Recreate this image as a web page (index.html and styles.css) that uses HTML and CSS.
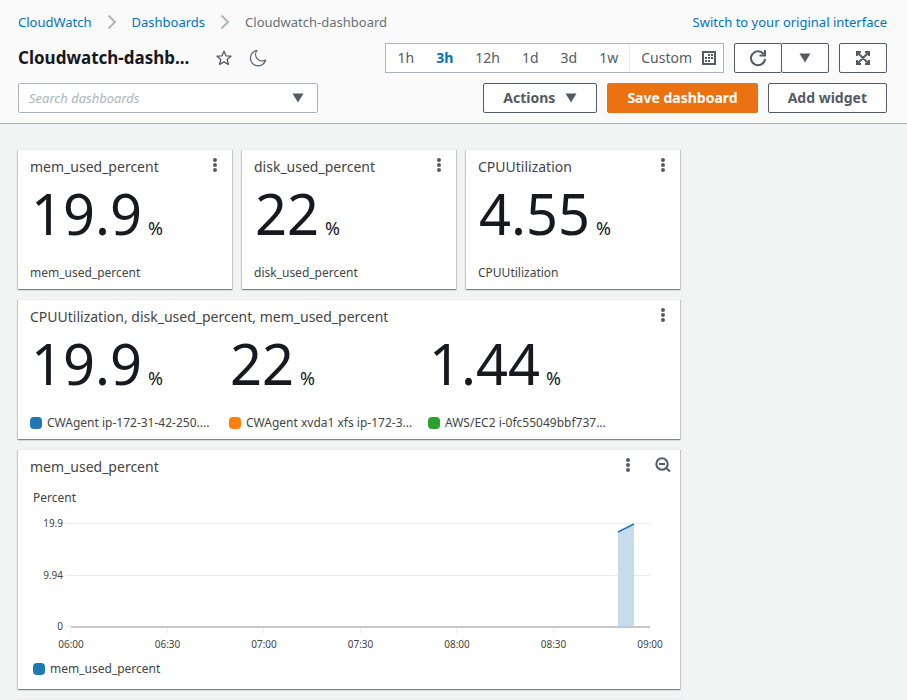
FILE: index.html
```html
<!DOCTYPE html>
<html lang="en">
<head>
<meta charset="utf-8">
<title>Cloudwatch-dashboard</title>
<link rel="stylesheet" href="styles.css">
</head>
<body>
<svg class="sprite" aria-hidden="true">
  <symbol id="chevron" viewBox="0 0 10 16"><path d="M1.500 1.500 8 8l-6.500 6.500" fill="none" stroke="#aab7b8" stroke-width="2"/></symbol>
  <symbol id="caret" viewBox="0 0 12 10"><path d="M.5.5h11L6 9.500z" fill="#545b64"/></symbol>
  <symbol id="dots" viewBox="0 0 4 14"><g fill="#545b64"><circle cx="2" cy="2" r="2"/><circle cx="2" cy="7" r="2"/><circle cx="2" cy="12" r="2"/></g></symbol>
</svg>

<header class="header">
  <div class="row row-top">
    <nav class="crumbs" aria-label="Breadcrumbs">
      <a href="#">CloudWatch</a>
      <svg class="chevron"><use href="#chevron"/></svg>
      <a href="#">Dashboards</a>
      <svg class="chevron"><use href="#chevron"/></svg>
      <span>Cloudwatch-dashboard</span>
    </nav>
    <a class="switch" href="#">Switch to your original interface</a>
  </div>

  <div class="row">
    <div class="heading">
      <h1>Cloudwatch-dashb...</h1>
      <button class="icon-btn" type="button" aria-label="Favorite">
        <svg width="16" height="16" viewBox="0 0 16 16"><path d="M8 1.200l2 4.600 5 .4-3.800 3.300 1.200 5L8 11.900l-4.400 2.600 1.200-5L1 6.200l5-.4z" fill="none" stroke="#545b64" stroke-width="1.300" stroke-linejoin="round"/></svg>
      </button>
      <button class="icon-btn" type="button" aria-label="Dark mode">
        <svg width="18" height="18" viewBox="0 0 18 18"><path d="M8 1.500A7.700 7.700 0 1 0 16.600 11 6.500 6.500 0 0 1 8 1.500z" fill="none" stroke="#545b64" stroke-width="1.200" stroke-linejoin="round"/></svg>
      </button>
    </div>
    <div class="tools">
      <div class="ranges">
        <button type="button">1h</button>
        <button type="button" class="active">3h</button>
        <button type="button">12h</button>
        <button type="button">1d</button>
        <button type="button">3d</button>
        <button type="button">1w</button>
        <button type="button" class="custom">Custom
          <svg width="14" height="14" viewBox="0 0 14 14"><path d="M1 1h12v12H1z" fill="none" stroke="#545b64" stroke-width="2"/><path d="M6 3h2v2H6zM9 3h2v2H9zM3 6h2v2H3zM6 6h2v2H6zM9 6h2v2H9zM3 9h2v2H3zM6 9h2v2H6z" fill="#545b64"/></svg>
        </button>
      </div>
      <div class="split">
        <button class="btn" type="button" aria-label="Refresh">
          <svg width="18" height="18" viewBox="0 0 18 18"><path d="M14.800 5.200A7 7 0 1 0 16 9.800" fill="none" stroke="#545b64" stroke-width="2"/><path d="M16 1v5.500h-5.500" fill="none" stroke="#545b64" stroke-width="2"/></svg>
        </button>
        <button class="btn" type="button" aria-label="Refresh options"><svg class="caret"><use href="#caret"/></svg></button>
      </div>
      <button class="btn square" type="button" aria-label="Full screen">
        <svg width="14" height="14" viewBox="0 0 14 14"><path d="M1 5V1h4M9 1h4v4M13 9v4H9M5 13H1V9M1.500 1.500l11 11M12.500 1.500l-11 11" fill="none" stroke="#545b64" stroke-width="2"/></svg>
      </button>
    </div>
  </div>

  <div class="row">
    <div class="search">
      <input type="text" placeholder="Search dashboards" aria-label="Search dashboards">
      <svg class="caret"><use href="#caret"/></svg>
    </div>
    <div class="tools">
      <button class="btn text" type="button">Actions <svg class="caret"><use href="#caret"/></svg></button>
      <button class="btn text primary" type="button">Save dashboard</button>
      <button class="btn text" type="button">Add widget</button>
    </div>
  </div>
</header>

<main class="board">
  <section class="card">
    <div class="card-head"><h2>mem_used_percent</h2><button class="menu" type="button" aria-label="Widget actions"><svg><use href="#dots"/></svg></button></div>
    <p class="value">19.9<span>%</span></p>
    <p class="label">mem_used_percent</p>
  </section>
  <section class="card">
    <div class="card-head"><h2>disk_used_percent</h2><button class="menu" type="button" aria-label="Widget actions"><svg><use href="#dots"/></svg></button></div>
    <p class="value">22<span>%</span></p>
    <p class="label">disk_used_percent</p>
  </section>
  <section class="card">
    <div class="card-head"><h2>CPUUtilization</h2><button class="menu" type="button" aria-label="Widget actions"><svg><use href="#dots"/></svg></button></div>
    <p class="value">4.55<span>%</span></p>
    <p class="label">CPUUtilization</p>
  </section>

  <section class="card wide">
    <div class="card-head"><h2>CPUUtilization, disk_used_percent, mem_used_percent</h2><button class="menu" type="button" aria-label="Widget actions"><svg><use href="#dots"/></svg></button></div>
    <div class="metrics">
      <div>
        <p class="value">19.9<span>%</span></p>
        <p class="label"><i class="swatch blue"></i>CWAgent ip-172-31-42-250....</p>
      </div>
      <div>
        <p class="value">22<span>%</span></p>
        <p class="label"><i class="swatch orange"></i>CWAgent xvda1 xfs ip-172-3...</p>
      </div>
      <div>
        <p class="value">1.44<span>%</span></p>
        <p class="label"><i class="swatch green"></i>AWS/EC2 i-0fc55049bbf737...</p>
      </div>
    </div>
  </section>

  <section class="card wide">
    <div class="card-head">
      <h2>mem_used_percent</h2>
      <button class="menu" type="button" aria-label="Widget actions"><svg><use href="#dots"/></svg></button>
      <button class="zoom" type="button" aria-label="Zoom out">
        <svg width="16" height="16" viewBox="0 0 16 16"><g fill="none" stroke="#545b64" stroke-width="2"><circle cx="7" cy="7" r="5.700"/><path d="M4 7h6M11 11l4 3.500"/></g></svg>
      </button>
    </div>
    <div class="chart">
      <p class="unit">Percent</p>
      <div class="plot">
        <div class="y-axis"><span>19.9</span><span>9.94</span><span>0</span></div>
        <svg viewBox="0 0 584 110" preserveAspectRatio="none" role="img" aria-label="mem_used_percent over time">
          <g fill="#eaeded">
            <path d="M0 0h584v1H0zM0 52h584v1H0zM0 103h5v1H0z"/>
            <path d="M4 105h1v5h-1zM101 105h1v5h-1zM197 105h1v5h-1zM294 105h1v5h-1zM390 105h1v5h-1zM487 105h1v5h-1zM583 105h1v5h-1z"/>
          </g>
          <path d="M552 9l16-8v102h-16z" fill="#c7dcea"/>
          <path d="M552 9l16-8" stroke="#1f77b4" stroke-width="1.500"/>
          <path d="M5 103h579v2H5z" fill="#c8c8c8"/>
        </svg>
      </div>
      <div class="x-axis"><span>06:00</span><span>06:30</span><span>07:00</span><span>07:30</span><span>08:00</span><span>08:30</span><span>09:00</span></div>
      <p class="label"><i class="swatch blue"></i>mem_used_percent</p>
    </div>
  </section>
  <section class="card wide" aria-label="Empty widget"></section>
</main>
</body>
</html>
```
FILE: styles.css
```css
* { box-sizing: border-box; }

body {
  margin: 0;
  overflow: hidden;
  background: #f2f3f3;
  color: #16191f;
  font: 14px/20px "Noto Sans", "Open Sans", sans-serif;
}

h1, h2, p { margin: 0; font-weight: 400; }
a { color: #0073bb; text-decoration: none; }
button, input { font: inherit; color: inherit; }
button { padding: 0; border: 0; background: none; cursor: pointer; }
svg { display: block; flex: none; }
.sprite { position: absolute; width: 0; height: 0; }

.header {
  display: flex;
  flex-direction: column;
  gap: 10px;
  padding: 11px 20px 10px 18px;
  background: #fafafa;
  border-bottom: 1px solid #aab7b8;
}
.row { display: flex; justify-content: space-between; align-items: center; }
.row-top { height: 22px; }
.crumbs { display: flex; align-items: center; gap: 15px; color: #687078; font-size: 13px; }
.chevron { width: 10px; height: 16px; }
.switch { font-size: 13px; }

.heading { display: flex; align-items: center; gap: 16px; }
h1 { margin-right: 10px; font-size: 17px; font-weight: 700; }
.icon-btn { width: 18px; height: 18px; display: grid; place-items: center; }

.tools { display: flex; gap: 10px; }
.ranges {
  display: flex;
  height: 30px;
  border: 1px solid #aab7b8;
  background: #fff;
  color: #545b64;
}
.ranges button { padding: 0 11px; }
.ranges .active { color: #0073bb; font-weight: 700; }
.ranges .custom {
  display: flex;
  align-items: center;
  gap: 10px;
  padding: 0 7px 0 11px;
  border-left: 1px solid #eaeded;
}

.btn {
  display: flex;
  align-items: center;
  justify-content: center;
  gap: 10px;
  height: 30px;
  width: 48px;
  border: 1px solid #545b64;
  border-radius: 2px;
  background: #fff;
  color: #545b64;
  font-weight: 700;
}
.btn.text { width: auto; padding: 0 19px; }
.btn.primary { border-color: #ec7211; background: #ec7211; color: #fff; }
.split { display: flex; }
.split .btn + .btn { margin-left: -1px; }
.caret { width: 12px; height: 10px; }

.search {
  display: flex;
  align-items: center;
  width: 300px;
  height: 30px;
  padding: 0 13px 0 10px;
  border: 1px solid #aab7b8;
  border-radius: 2px;
  background: #fff;
}
.search input { flex: 1; min-width: 0; padding: 0; border: 0; outline: 0; background: none; font-size: 13px; }
.search input::placeholder { color: #aab7b8; font-style: italic; opacity: 1; }

.board {
  display: grid;
  grid-template-columns: repeat(4, 1fr);
  gap: 10px;
  padding: 25px 3px 0 18px;
}
.card {
  min-height: 140px;
  padding: 7px 12px 0;
  border-top: 1px solid #eaeded;
  background: #fff;
  box-shadow: 0 1px 1px rgba(0, 28, 36, .3), 1px 1px 1px rgba(0, 28, 36, .15), -1px 1px 1px rgba(0, 28, 36, .15);
}
.wide { grid-column: span 3; }

.card-head { display: flex; height: 20px; margin-right: -3px; color: #444; }
.card-head h2 { flex: 1; font-size: 14px; line-height: 20px; white-space: nowrap; }
.menu { display: grid; place-items: center; width: 16px; height: 16px; }
.menu svg { width: 4px; height: 14px; }
.zoom { width: 16px; height: 16px; margin-left: 19px; }

.value { display: flex; align-items: baseline; gap: 6px; height: 78px; padding-left: 1px; font-size: 56px; line-height: 72px; }
.value span { font-size: 18px; }
.label { display: flex; align-items: center; margin-top: 8px; color: #444; font-size: 12px; line-height: 20px; white-space: nowrap; }

.metrics { display: grid; grid-template-columns: repeat(3, 199px); }
.swatch { width: 12px; height: 12px; margin-right: 5px; border-radius: 4px; }
.blue { background: #1f77b4; }
.orange { background: #ff7f0e; }
.green { background: #2ca02c; }

.chart { padding: 11px 18px 10px 3px; color: #444; }
.unit { font-size: 12px; line-height: 20px; }
.plot { display: flex; align-items: center; gap: 3px; margin-top: 8px; height: 117px; }
.y-axis { display: flex; flex-direction: column; justify-content: space-between; width: 30px; height: 117px; text-align: right; font-size: 10px; line-height: 14px; }
.plot svg { flex: 1; min-width: 0; height: 110px; align-self: flex-end; }
.x-axis { display: flex; justify-content: space-between; margin: 4px -20px 0 18px; font-size: 10px; line-height: 14px; }
.x-axis span { width: 40px; text-align: center; }
.chart .label { margin-top: 8px; }
```
